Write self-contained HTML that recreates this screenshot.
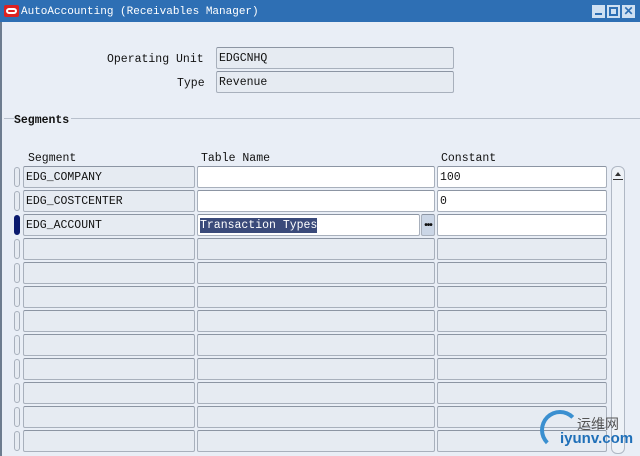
<!DOCTYPE html>
<html><head><style>
body{margin:0;width:640px;height:456px;overflow:hidden;background:#e9eef6;font-family:"Liberation Mono","Noto Sans CJK SC",monospace;font-size:11.5px;color:#111;position:relative}
.a{position:absolute;box-sizing:border-box}
.tb{left:0;top:0;width:640px;height:22px;background:#2e6fb4;color:#fff;line-height:24px}
.f{border:1px solid #a8b0bc;border-top-color:#8c95a3;border-radius:2px;background:#e6ebf2;padding-left:2px;line-height:22px;height:22px;white-space:nowrap}
.w{background:#fff}
.ind{width:6px;height:20px;border:1px solid #a8b0bc;border-radius:3px;background:#e6ebf2}
</style></head><body>
<div class="a tb"><div class="a" style="left:4px;top:5px;width:15px;height:12px;background:#d22;border-radius:2px"><div class="a" style="left:2px;top:3px;width:11px;height:6px;border:2px solid #fff;border-radius:4px"></div></div><span style="position:absolute;left:21px;font-size:11px">AutoAccounting (Receivables Manager)</span>
<div class="a" style="left:592px;top:5px;width:13px;height:13px;background:#cfe0f2"><div class="a" style="left:3px;top:8px;width:7px;height:2px;background:#2e6fb4"></div></div>
<div class="a" style="left:607px;top:5px;width:13px;height:13px;background:#cfe0f2"><div class="a" style="left:2px;top:2px;width:9px;height:9px;border:2px solid #2e6fb4"></div></div>
<div class="a" style="left:622px;top:5px;width:13px;height:13px;background:#cfe0f2;color:#2e6fb4;font-weight:bold;line-height:13px;text-align:center;font-family:'Liberation Sans';font-size:12px">✕</div></div>
<div class="a" style="left:0;top:22px;width:2px;height:434px;background:#6d7c8f"></div>
<div class="a" style="left:107px;top:53px">Operating Unit</div>
<div class="a f" style="left:216px;top:47px;width:238px">EDGCNHQ</div>
<div class="a" style="left:177px;top:77px">Type</div>
<div class="a f" style="left:216px;top:71px;width:238px">Revenue</div>
<div class="a" style="left:4px;top:118px;width:636px;height:1px;background:#b8c0cc"></div>
<div class="a" style="left:14px;top:114px;background:#e9eef6;font-weight:bold;padding-right:2px">Segments</div>
<div class="a" style="left:28px;top:152px">Segment</div>
<div class="a" style="left:201px;top:152px">Table Name</div>
<div class="a" style="left:441px;top:152px">Constant</div>
<div class="a" style="left:611px;top:166px;width:14px;height:288px;border:1px solid #b0b8c4;border-radius:6px;background:#eef2f7"><div class="a" style="left:3px;top:5px;width:0;height:0;border-left:3px solid transparent;border-right:3px solid transparent;border-bottom:4px solid #333"></div><div class="a" style="left:1px;top:12px;width:10px;height:1px;background:#333"></div></div>
<div id="rows"></div>
<script>
var d=[["EDG_COMPANY","","100"],["EDG_COSTCENTER","","0"],["EDG_ACCOUNT","Transaction Types",""]],h="";
for(var i=0;i<12;i++){var y=166+i*24,r=d[i]||["","",""];
h+='<div class="a ind" style="left:14px;top:'+(y+1)+'px;'+(i==2?'background:#0a1a6e;border-color:#0a1a6e':'')+'"></div>';
h+='<div class="a f" style="left:23px;top:'+y+'px;width:172px">'+r[0]+'</div>';
if(i==2){h+='<div class="a f w" style="left:197px;top:'+y+'px;width:223px"><span style="background:#3a4a7a;color:#fff;padding:1px 0">'+r[1]+'</span></div><div class="a f" style="left:421px;top:'+y+'px;width:14px;background:#cbd6e6;font-weight:bold;text-align:center;padding:0;font-family:\'Liberation Sans\';font-size:10px;letter-spacing:-1px">•••</div>';}
else h+='<div class="a f'+(i<2?' w':'')+'" style="left:197px;top:'+y+'px;width:238px">'+r[1]+'</div>';
h+='<div class="a f'+(i<3?' w':'')+'" style="left:437px;top:'+y+'px;width:170px">'+r[2]+'</div>';}
document.getElementById('rows').innerHTML=h;
</script>
<div class="a" style="left:540px;top:410px;width:40px;height:40px;border:4px solid #3a8fd0;border-radius:50%;border-right-color:transparent;border-bottom-color:transparent"></div>
<div class="a" style="left:577px;top:414px;font-family:'Noto Sans CJK SC',sans-serif;font-size:14px;color:#555">运维网</div>
<div class="a" style="left:560px;top:430px;font-family:'Liberation Sans',sans-serif;font-size:15px;font-weight:bold;color:#1f6fb8">iyunv.com</div>
</body></html>
